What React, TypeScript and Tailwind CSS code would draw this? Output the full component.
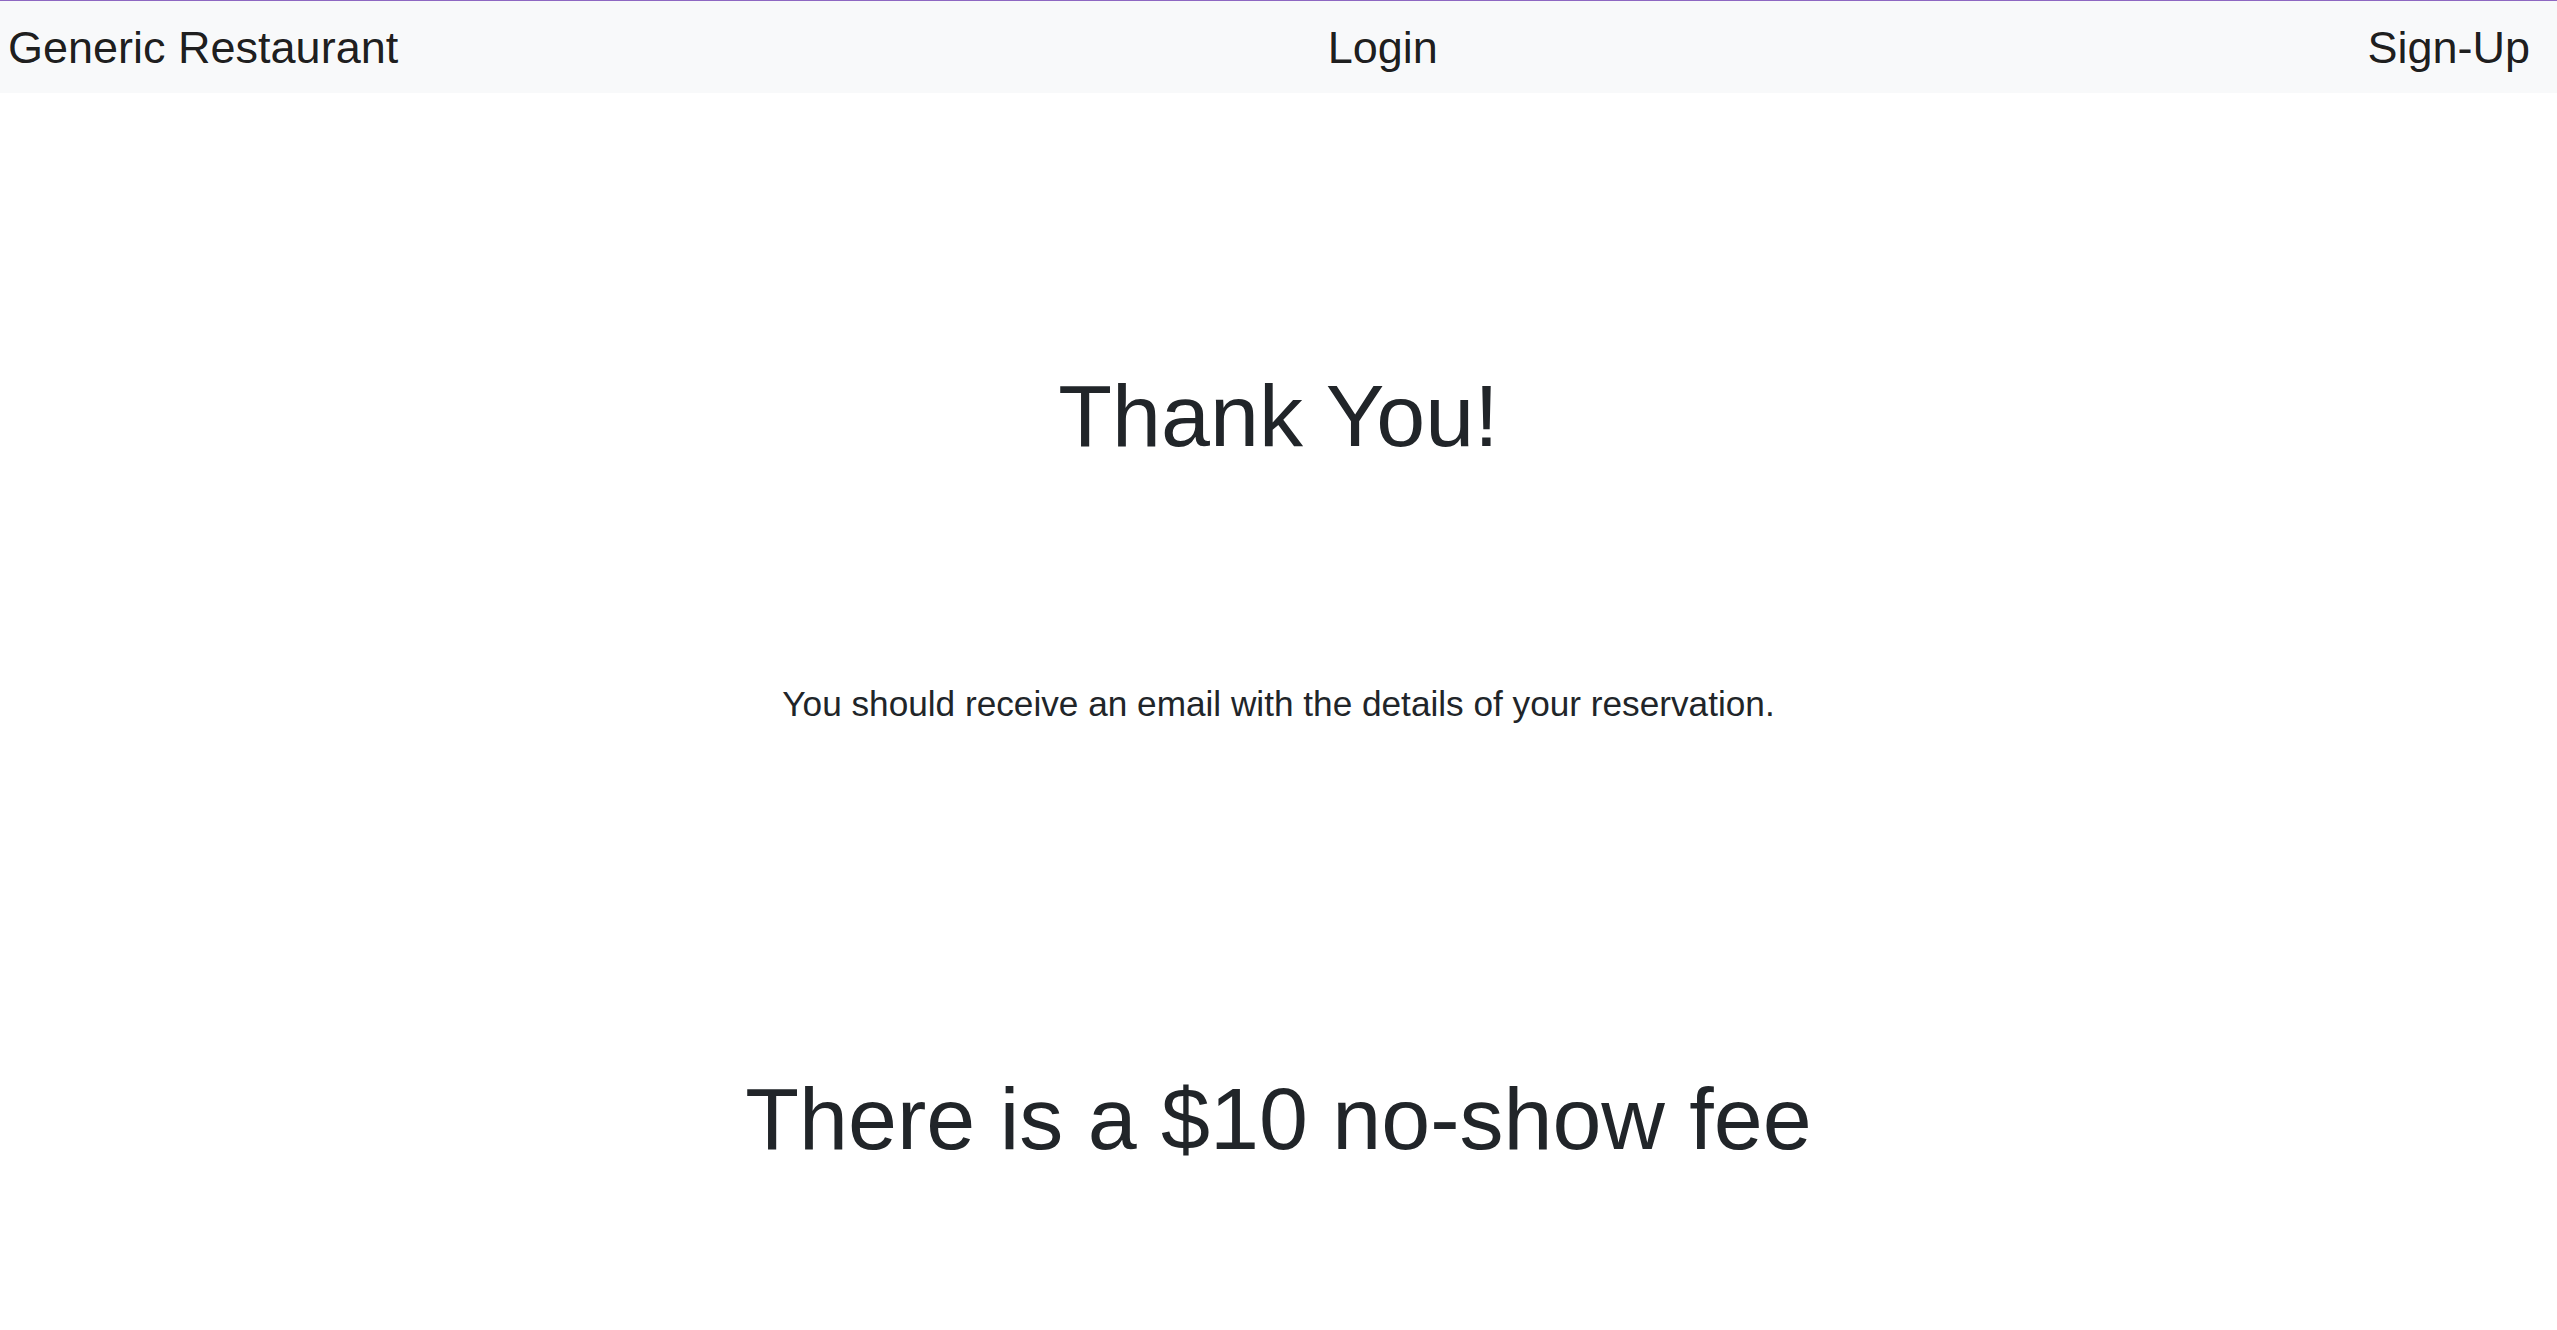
export default function App() {
  return (
    <div className="min-h-screen bg-white font-['Liberation_Sans',Arial,sans-serif] text-[#212529]">
      <nav className="flex h-[93px] items-center justify-between border-t border-[#8e68c2] bg-[#f8f9fa] pt-[2px] pl-[8px] pr-[27px] text-[45px] leading-[1.5] text-[rgba(0,0,0,0.9)]">
        <span>Generic Restaurant</span>
        <span>Login</span>
        <span>Sign-Up</span>
      </nav>
      <main className="flex flex-col items-center text-center">
        <h1 className="mt-[270px] text-[88px] leading-[1.2]">Thank You!</h1>
        <p className="mt-[209px] text-[35.2px] leading-[1.5]">
          You should receive an email with the details of your reservation.
        </p>
        <h1 className="mt-[336px] text-[88px] leading-[1.2]">
          There is a $10 no-show fee
        </h1>
      </main>
    </div>
  );
}
